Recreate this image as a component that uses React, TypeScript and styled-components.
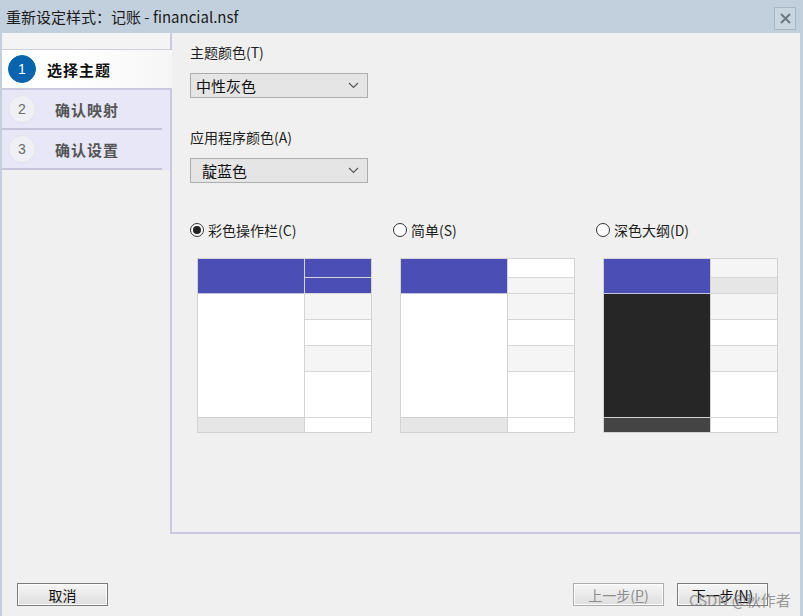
import React from "react";
import styled, { createGlobalStyle } from "styled-components";

const GlobalStyle = createGlobalStyle`
  html, body {
    margin: 0;
    padding: 0;
    background: #f0f0f0;
  }
  body {
    font-family: "Noto Sans CJK SC", "Liberation Sans", sans-serif;
    color: #1e1e1e;
  }
`;

const Window = styled.div`
  position: relative;
  width: 803px;
  height: 616px;
  display: flex;
  flex-direction: column;
  background: #f0f0f0;
  overflow: hidden;
`;

const TitleBar = styled.div`
  height: 33px;
  flex: none;
  display: flex;
  align-items: center;
  justify-content: space-between;
  padding: 0 7px 0 6px;
  background: #c2d0dd;
`;

const Title = styled.div`
  font-size: 15px;
  line-height: 20px;
  color: #1a1a1a;
`;

const CloseButton = styled.div`
  width: 20px;
  height: 21px;
  margin-top: 4px;
  display: flex;
  align-items: center;
  justify-content: center;
  border: 1px solid #a8b6c3;
  background: #c9d5e0;
`;

const Frame = styled.div`
  flex: 1;
  display: flex;
  flex-direction: column;
  border-left: 2px solid #c2d0dd;
  border-right: 3px solid #c2d0dd;
`;

const Main = styled.div`
  height: 501px;
  display: flex;
`;

const Nav = styled.div`
  width: 168px;
  flex: none;
  display: flex;
  flex-direction: column;
`;

const NavTop = styled.div`
  height: 16px;
  background: #f4f4f4;
  border-bottom: 1px solid #cfcde0;
`;

const NavItem = styled.div<{ active?: boolean }>`
  position: relative;
  height: 38px;
  display: flex;
  align-items: center;
  padding-left: 6px;
  margin-right: ${(p) => (p.active ? "-2px" : "0")};
  background: ${(p) =>
    p.active ? "linear-gradient(90deg, #ffffff 40%, #f6f6f6)" : "#e7e7f7"};
  border-bottom: 2px solid ${(p) => (p.active ? "#cbc9dd" : "transparent")};
  ${(p) =>
    !p.active &&
    `
    &::after {
      content: "";
      position: absolute;
      left: 0;
      right: 8px;
      bottom: -2px;
      height: 2px;
      background: #c6c4d8;
    }
  `}
`;

const StepCircle = styled.div<{ active?: boolean }>`
  width: 28px;
  height: 28px;
  border-radius: 50%;
  flex: none;
  display: flex;
  align-items: center;
  justify-content: center;
  font-family: "Liberation Sans", sans-serif;
  font-size: 14px;
  color: ${(p) => (p.active ? "#ffffff" : "#6a6a6a")};
  background: ${(p) => (p.active ? "#0864ae" : "#efeff6")};
  border: 1px solid ${(p) => (p.active ? "#0864ae" : "#e2e2ec")};
  box-sizing: border-box;
`;

const StepLabel = styled.div<{ active?: boolean }>`
  margin-left: ${(p) => (p.active ? "11px" : "19px")};
  font-size: 15px;
  font-weight: 700;
  letter-spacing: 1px;
  color: ${(p) => (p.active ? "#111111" : "#555555")};
`;

const Panel = styled.div`
  flex: 1;
  border-left: 2px solid #cbc9dd;
  border-bottom: 2px solid #cbc9dd;
  padding: 9px 0 0 18px;
  display: flex;
  flex-direction: column;
`;

const FieldLabel = styled.div<{ gap?: number }>`
  font-size: 14px;
  line-height: 20px;
  margin-top: ${(p) => p.gap ?? 0}px;
  color: #1e1e1e;
`;

const Select = styled.div<{ indent?: number }>`
  margin-top: 11px;
  width: 178px;
  height: 25px;
  box-sizing: border-box;
  border: 1px solid #adadad;
  background: #e5e5e5;
  display: flex;
  align-items: center;
  justify-content: space-between;
  padding: 0 8px 0 ${(p) => p.indent ?? 5}px;
  font-size: 15px;
  color: #111;
`;

const ThemeGrid = styled.div`
  margin-top: 37px;
  display: grid;
  grid-template-columns: repeat(3, 203px);
`;

const ThemeOption = styled.div`
  display: flex;
  flex-direction: column;
`;

const RadioRow = styled.div`
  display: flex;
  align-items: center;
  height: 20px;
  font-size: 14px;
`;

const RadioDot = styled.div<{ checked?: boolean }>`
  width: 14px;
  height: 14px;
  box-sizing: border-box;
  border-radius: 50%;
  border: 1px solid #333;
  background: #fff;
  margin-right: 4px;
  display: flex;
  align-items: center;
  justify-content: center;
  &::after {
    content: "";
    width: 8px;
    height: 8px;
    border-radius: 50%;
    background: ${(p) => (p.checked ? "#222" : "transparent")};
  }
`;

const Preview = styled.div`
  margin: 18px 0 0 7px;
  width: 175px;
  height: 175px;
  box-sizing: border-box;
  border: 1px solid #d3d3d3;
  display: flex;
`;

const PreviewCol = styled.div<{ wide?: boolean }>`
  width: ${(p) => (p.wide ? "106px" : "auto")};
  flex: ${(p) => (p.wide ? "none" : "1")};
  display: flex;
  flex-direction: column;
  border-right: ${(p) => (p.wide ? "1px solid #d3d3d3" : "none")};
`;

const Cell = styled.div<{ h: number; bg: string; line?: string }>`
  height: ${(p) => p.h}px;
  flex: none;
  box-sizing: border-box;
  background: ${(p) => p.bg};
  border-bottom: 1px solid ${(p) => p.line ?? "#d6d6d6"};
  &:last-child {
    border-bottom: none;
    flex: 1;
  }
`;

const Footer = styled.div`
  flex: 1;
  display: flex;
  align-items: flex-start;
  justify-content: space-between;
  padding: 49px 32px 0 15px;
`;

const ButtonGroup = styled.div`
  display: flex;
  gap: 13px;
`;

const Button = styled.div<{ disabled?: boolean }>`
  width: 91px;
  height: 23px;
  box-sizing: border-box;
  display: flex;
  align-items: center;
  justify-content: center;
  font-size: 14px;
  color: ${(p) => (p.disabled ? "#8c8c8c" : "#111")};
  border: 1px solid ${(p) => (p.disabled ? "#adadad" : "#7c7c7c")};
  background: linear-gradient(#f6f6f6, #dedede);
  box-shadow: inset 0 0 0 1px #fbfbfb;
`;

const Key = styled.span`
  text-decoration: underline;
`;

const Watermark = styled.div`
  position: absolute;
  left: 689px;
  top: 589px;
  font-size: 15px;
  color: rgba(120, 120, 120, 0.75);
  pointer-events: none;
`;

const Chevron = () => (
  <svg width="11" height="7" viewBox="0 0 11 7">
    <path d="M1 1 L5.5 5.5 L10 1" fill="none" stroke="#555" strokeWidth="1.1" />
  </svg>
);

type Theme = {
  label: string;
  checked?: boolean;
  left: [string, string, string];
  right: string[];
};

const themes: Theme[] = [
  {
    label: "彩色操作栏(C)",
    checked: true,
    left: ["#4a4eb5", "#ffffff", "#e6e6e6"],
    right: ["#4a4eb5", "#4a4eb5", "#f5f5f5", "#ffffff", "#f5f5f5", "#ffffff", "#ffffff"],
  },
  {
    label: "简单(S)",
    left: ["#4a4eb5", "#ffffff", "#e6e6e6"],
    right: ["#ffffff", "#f5f5f5", "#f5f5f5", "#ffffff", "#f5f5f5", "#ffffff", "#ffffff"],
  },
  {
    label: "深色大纲(D)",
    left: ["#4a4eb5", "#262626", "#444444"],
    right: ["#f5f5f5", "#e6e6e6", "#f5f5f5", "#ffffff", "#f5f5f5", "#ffffff", "#ffffff"],
  },
];

const rightHeights = [19, 16, 26, 26, 26, 46, 16];

const steps = ["选择主题", "确认映射", "确认设置"];

export default function App() {
  return (
    <Window>
      <GlobalStyle />
      <TitleBar>
        <Title>重新设定样式：记账 - financial.nsf</Title>
        <CloseButton>
          <svg width="11" height="11" viewBox="0 0 11 11">
            <path d="M1 1 L10 10 M10 1 L1 10" stroke="#6c7782" strokeWidth="2" />
          </svg>
        </CloseButton>
      </TitleBar>
      <Frame>
        <Main>
          <Nav>
            <NavTop />
            {steps.map((s, i) => (
              <NavItem key={s} active={i === 0}>
                <StepCircle active={i === 0}>{i + 1}</StepCircle>
                <StepLabel active={i === 0}>{s}</StepLabel>
              </NavItem>
            ))}
          </Nav>
          <Panel>
            <FieldLabel>主题颜色(T)</FieldLabel>
            <Select>
              中性灰色
              <Chevron />
            </Select>
            <FieldLabel gap={29}>应用程序颜色(A)</FieldLabel>
            <Select indent={11}>
              靛蓝色
              <Chevron />
            </Select>
            <ThemeGrid>
              {themes.map((t) => (
                <ThemeOption key={t.label}>
                  <RadioRow>
                    <RadioDot checked={t.checked} />
                    {t.label}
                  </RadioRow>
                  <Preview>
                    <PreviewCol wide>
                      <Cell h={35} bg={t.left[0]} line="#c4c4dc" />
                      <Cell h={124} bg={t.left[1]} line="#d0d0d0" />
                      <Cell h={14} bg={t.left[2]} />
                    </PreviewCol>
                    <PreviewCol>
                      {t.right.map((c, i) => (
                        <Cell key={i} h={rightHeights[i]} bg={c} />
                      ))}
                    </PreviewCol>
                  </Preview>
                </ThemeOption>
              ))}
            </ThemeGrid>
          </Panel>
        </Main>
        <Footer>
          <Button>取消</Button>
          <ButtonGroup>
            <Button disabled>
              上一步(<Key>P</Key>)
            </Button>
            <Button>
              下一步(<Key>N</Key>)
            </Button>
          </ButtonGroup>
        </Footer>
      </Frame>
      <Watermark>CSDN @秋作者</Watermark>
    </Window>
  );
}
